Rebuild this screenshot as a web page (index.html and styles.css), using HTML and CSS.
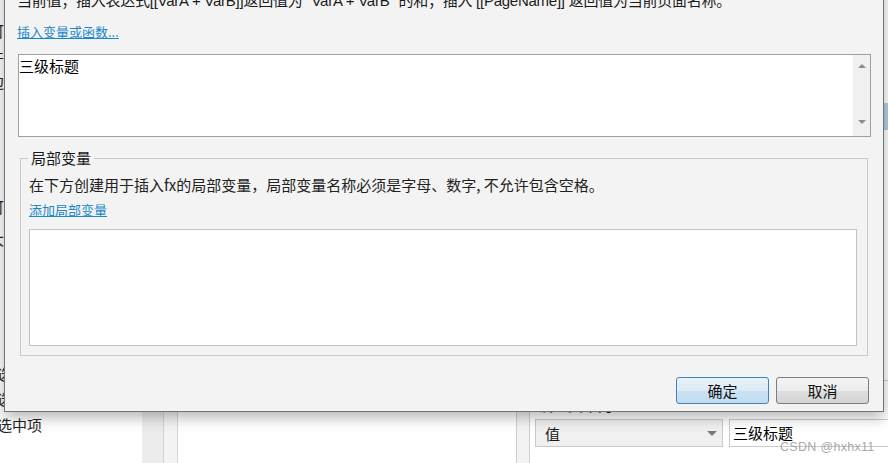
FILE: index.html
```html
<!DOCTYPE html>
<html lang="zh-CN">
<head>
<meta charset="utf-8">
<title>插入变量</title>
<link rel="stylesheet" href="styles.css">
</head>
<body>
<div class="app">
  <div class="left">
    <div class="frag f1">可</div>
    <div class="frag f2">件</div>
    <div class="frag f3">边</div>
    <div class="frag f4">可</div>
    <div class="frag f5">大</div>
    <div class="frag f6 sel-line">选中时</div>
    <div class="frag f7 sel-line">选中后</div>
    <div class="frag f8 sel-line">选中项</div>
  </div>
  <div class="split1"></div>
  <div class="split2"></div>
  <div class="mid"></div>
  <div class="split3"></div>
  <div class="right">
    <div class="sel-row"></div>
    <div class="rule"></div>
    <div class="set-label">设置文本为:</div>
    <div class="controls">
      <div class="select"><span>值</span><i class="caret"></i></div>
      <div class="input">三级标题</div>
    </div>
  </div>
</div>

<div class="dialog">
  <p class="dlg-text">当前值；插入表达式[[VarA + VarB]]返回值为 "VarA + VarB" 的和；插入 [[PageName]] 返回值为当前页面名称。</p>
  <a class="link link-top" href="#">插入变量或函数...</a>
  <div class="editor">
    <div class="editor-text">三级标题</div>
    <div class="scroll"><i class="up"></i><i class="down"></i></div>
  </div>
  <div class="group">
    <span class="legend">局部变量</span>
    <p class="group-text">在下方创建用于插入fx的局部变量，局部变量名称必须是字母、数字, 不允许包含空格。</p>
    <a class="link link-add" href="#">添加局部变量</a>
    <div class="box"></div>
  </div>
  <div class="buttons">
    <button class="btn btn-ok">确定</button>
    <button class="btn btn-cancel">取消</button>
  </div>
</div>

<div class="watermark">CSDN @hxhx11</div>
</body>
</html>
```

FILE: styles.css
```css
* { box-sizing: border-box; }

body {
  margin: 0;
  width: 888px;
  height: 463px;
  overflow: hidden;
  background: #fff;
  position: relative;
  font-family: "Noto Sans CJK SC", "Microsoft YaHei", sans-serif;
  color: #1a1a1a;
}

.app {
  display: flex;
  height: 463px;
}

.left {
  width: 142px;
  flex: none;
  font-size: 15px;
  line-height: 20px;
  color: #222;
  overflow: hidden;
}
.frag { margin-left: -11px; white-space: nowrap; }
.sel-line { margin-left: -3px; }
.f1 { margin-top: 21px; }
.f2 { margin-top: 6px; }
.f3 { margin-top: 5px; }
.f4 { margin-top: 105px; }
.f5 { margin-top: 12px; }
.f6 { margin-top: 115px; }
.f7 { margin-top: 5px; }
.f8 { margin-top: 6px; }

.split1 {
  width: 22px;
  flex: none;
  background: #ececec;
  border-right: 1px solid #d2d2d2;
}
.split2 {
  width: 14px;
  flex: none;
  background: #f3f3f3;
  border-right: 1px solid #d6d6d6;
}
.mid {
  width: 338px;
  flex: none;
  background: #fff;
}
.split3 {
  width: 14px;
  flex: none;
  background: #f3f3f3;
  border-left: 1px solid #cfcfcf;
  border-right: 1px solid #cfcfcf;
}
.right {
  flex: 1;
  padding-left: 5px;
  display: flex;
  flex-direction: column;
}
.sel-row {
  margin-top: 103px;
  height: 27px;
  background: #b3d1e4;
  margin-left: -5px;
}
.rule {
  margin-top: 250px;
  height: 1px;
  background: #cfcfcf;
  margin-left: -5px;
}
.set-label {
  margin-top: 14px;
  font-size: 15px;
  line-height: 20px;
  padding-left: 3px;
}
.controls {
  display: flex;
  margin-top: 4px;
  gap: 6px;
}
.select {
  width: 188px;
  height: 28px;
  border: 1px solid #c9c9c9;
  background: #f0f0f0;
  display: flex;
  align-items: center;
  padding-left: 9px;
  font-size: 15px;
}
.caret {
  margin-left: auto;
  margin-right: 5px;
  width: 0;
  height: 0;
  border-left: 5px solid transparent;
  border-right: 5px solid transparent;
  border-top: 5px solid #7a7a7a;
}
.input {
  flex: 1;
  height: 28px;
  border: 1px solid #c9c9c9;
  border-right: none;
  background: #fff;
  font-size: 15px;
  line-height: 26px;
  padding-left: 3px;
  color: #000;
}

/* dialog window */
.dialog {
  position: absolute;
  left: 4px;
  top: -30px;
  width: 880px;
  border: 1px solid #737373;
  background: #f3f3f3;
  box-shadow: 0 5px 14px rgba(0, 0, 0, 0.3);
  padding: 20px 0 7px;
}
.dlg-text {
  margin: 0 0 0 12px;
  font-family: "Liberation Sans", "Noto Sans CJK SC", sans-serif;
  font-size: 15px;
  line-height: 20px;
  letter-spacing: -0.25px;
  white-space: nowrap;
  color: #1a1a1a;
}
.link {
  display: block;
  width: max-content;
  font-size: 13px;
  line-height: 18px;
  color: #1a87c8;
  text-decoration: underline;
}
.link-top {
  margin: 12px 0 0 12px;
}
.editor {
  margin: 13px 12px 0 13px;
  height: 83px;
  border: 1px solid #a0a0a0;
  background: #fff;
  display: flex;
}
.editor-text {
  flex: 1;
  padding: 1px 0 0 0;
  font-size: 15px;
  line-height: 20px;
  color: #000;
}
.scroll {
  width: 17px;
  background: #f0f0f0;
  display: flex;
  flex-direction: column;
  align-items: center;
  justify-content: space-between;
  padding: 9px 0 12px;
}
.up, .down {
  width: 0;
  height: 0;
  border-left: 4px solid transparent;
  border-right: 4px solid transparent;
}
.up { border-bottom: 4px solid #8c8c8c; }
.down { border-top: 4px solid #8c8c8c; }

.group {
  position: relative;
  margin: 21px 15px 0 15px;
  border: 1px solid #c8c8c8;
  padding: 16px 10px 9px 8px;
}
.legend {
  position: absolute;
  left: 7px;
  top: -11px;
  padding: 0 3px;
  background: #f3f3f3;
  font-size: 15px;
  line-height: 20px;
  color: #1a1a1a;
}
.group-text {
  margin: 0;
  font-size: 15px;
  line-height: 20px;
  color: #222;
  white-space: nowrap;
}
.link-add {
  margin-top: 6px;
}
.box {
  margin-top: 10px;
  height: 117px;
  border: 1px solid #c3c3c3;
  background: #fff;
}

.buttons {
  display: flex;
  justify-content: flex-end;
  gap: 7px;
  margin: 21px 14px 0 0;
}
.btn {
  width: 93px;
  height: 27px;
  border-radius: 3px;
  font-family: inherit;
  font-size: 15px;
  line-height: 20px;
  color: #111;
  padding: 0;
}
.btn-ok {
  border: 1px solid #3f84b8;
  background: linear-gradient(#e9f3fa, #dbebf7 50%, #cae2f3 51%, #c1dcf0);
}
.btn-cancel {
  border: 1px solid #7d7d7d;
  background: linear-gradient(#f4f4f4, #ececec 50%, #dfdfdf 51%, #d4d4d4);
}

.watermark {
  position: absolute;
  left: 780px;
  top: 438px;
  font-family: "Liberation Sans", Arial, sans-serif;
  font-size: 12.5px;
  line-height: 18px;
  color: rgba(140, 140, 140, 0.75);
  letter-spacing: 0.3px;
}
```
